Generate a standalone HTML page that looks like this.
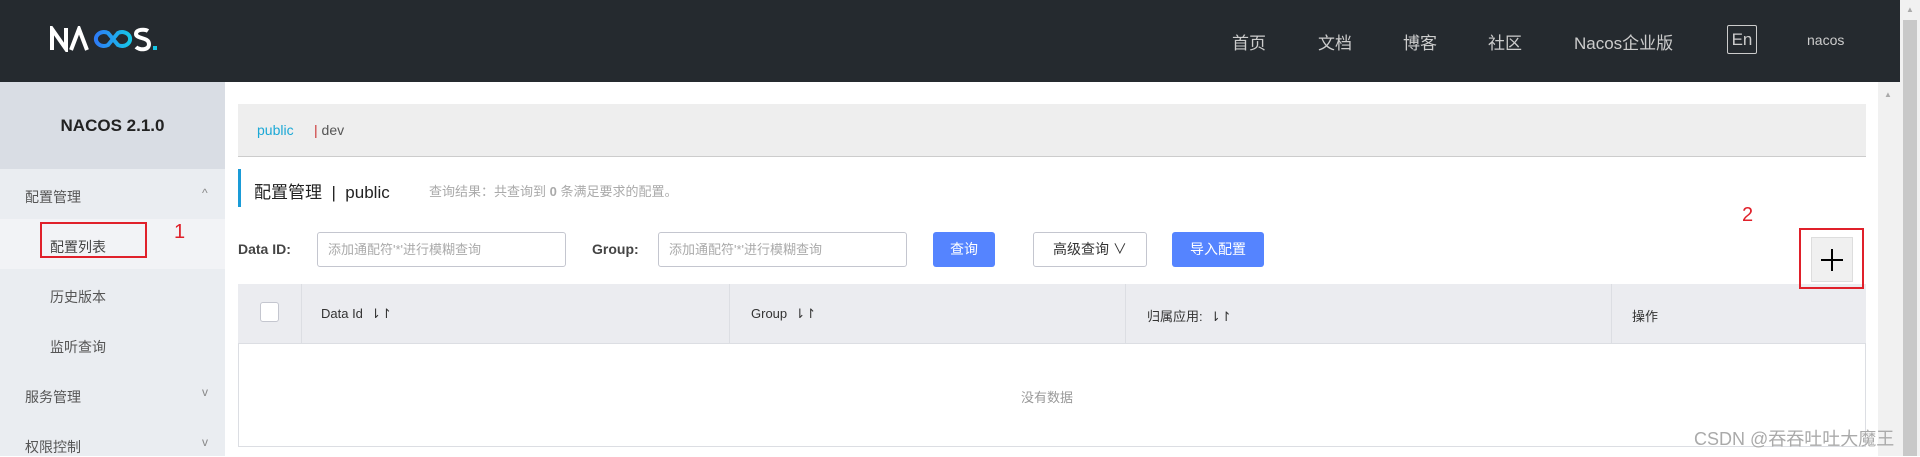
<!DOCTYPE html>
<html><head><meta charset="utf-8"><style>
*{margin:0;padding:0;box-sizing:border-box}
body{width:1920px;height:456px;overflow:hidden;background:#fff;font-family:"Liberation Sans","Noto Sans CJK SC",sans-serif;position:relative;color:#333}
.a{position:absolute;white-space:nowrap}
</style></head><body>
<div class="a" style="left:0;top:0;width:1900px;height:82px;background:#252a2f"></div>
<svg class="a" style="left:48px;top:26px" width="126" height="26" viewBox="0 0 126 26">
<defs><linearGradient id="g" x1="0" x2="1"><stop offset="0" stop-color="#2d7cf6"/><stop offset="1" stop-color="#17c7e8"/></linearGradient></defs>
<path d="M4 24V3L18 23V2" stroke="#fff" stroke-width="4" fill="none"/>
<path d="M23 24L31 3L39 24" stroke="#fff" stroke-width="4" fill="none"/>
<path d="M60 7a8 7 0 1 0 0 12L70 7a8 7 0 1 1 0 12Z" stroke="url(#g)" stroke-width="4" fill="none"/>
<path d="M100 5c-3-2-12-2-12 3s13 3 13 10-10 6-13 3" stroke="#fff" stroke-width="4" fill="none"/>
<rect x="105" y="20" width="4" height="4" fill="#17c7e8"/>
</svg>
<div class="a" style="left:1232px;top:29px;font-size:17px;color:#ccc">首页</div>
<div class="a" style="left:1318px;top:29px;font-size:17px;color:#ccc">文档</div>
<div class="a" style="left:1403px;top:29px;font-size:17px;color:#ccc">博客</div>
<div class="a" style="left:1488px;top:29px;font-size:17px;color:#ccc">社区</div>
<div class="a" style="left:1574px;top:29px;font-size:17px;color:#ccc">Nacos企业版</div>
<div class="a" style="left:1727px;top:25px;width:30px;height:29px;border:1px solid #ccc;border-radius:2px;color:#ccc;font-size:17px;text-align:center;line-height:27px">En</div>
<div class="a" style="left:1807px;top:32px;font-size:14px;color:#ccc">nacos</div>

<div class="a" style="left:0;top:82px;width:225px;height:374px;background:#eaedf1"></div>
<div class="a" style="left:0;top:82px;width:225px;height:87px;background:#d9dde4"></div>
<div class="a" style="left:0;top:116px;width:225px;text-align:center;font-size:17px;font-weight:bold;color:#222">NACOS 2.1.0</div>
<div class="a" style="left:25px;top:187px;font-size:14px;color:#555">配置管理</div>
<div class="a" style="left:202px;top:186px;font-size:12px;color:#888">^</div>
<div class="a" style="left:0;top:219px;width:225px;height:50px;background:#f2f3f6"></div>
<div class="a" style="left:50px;top:237px;font-size:14px;color:#444">配置列表</div>
<div class="a" style="left:40px;top:222px;width:107px;height:36px;border:2px solid #e0202a"></div>
<div class="a" style="left:174px;top:221px;font-size:20px;color:#e0202a">1</div>
<div class="a" style="left:50px;top:287px;font-size:14px;color:#555">历史版本</div>
<div class="a" style="left:50px;top:337px;font-size:14px;color:#555">监听查询</div>
<div class="a" style="left:25px;top:387px;font-size:14px;color:#555">服务管理</div>
<div class="a" style="left:202px;top:385px;font-size:12px;color:#888">v</div>
<div class="a" style="left:25px;top:437px;font-size:14px;color:#555">权限控制</div>
<div class="a" style="left:202px;top:435px;font-size:12px;color:#888">v</div>

<div class="a" style="left:238px;top:104px;width:1628px;height:53px;background:#eee;border-bottom:1px solid #ccc"></div>
<div class="a" style="left:257px;top:122px;font-size:14px;color:#1ba8d6">public</div>
<div class="a" style="left:314px;top:122px;font-size:14px;color:#555"><span style="color:#c33">|</span> dev</div>
<div class="a" style="left:238px;top:169px;width:3px;height:38px;background:#1a9bd7"></div>
<div class="a" style="left:254px;top:178px;font-size:17px;color:#222">配置管理 &nbsp;|&nbsp; public</div>
<div class="a" style="left:429px;top:181px;font-size:13px;color:#aaa">查询结果：共查询到 <b>0</b> 条满足要求的配置。</div>

<div class="a" style="left:238px;top:241px;font-size:14px;font-weight:bold;color:#444">Data ID:</div>
<div class="a" style="left:317px;top:232px;width:249px;height:35px;border:1px solid #c4c6cf;border-radius:3px;padding-left:10px;line-height:33px;font-size:13px;color:#aaa">添加通配符'*'进行模糊查询</div>
<div class="a" style="left:592px;top:241px;font-size:14px;font-weight:bold;color:#444">Group:</div>
<div class="a" style="left:658px;top:232px;width:249px;height:35px;border:1px solid #c4c6cf;border-radius:3px;padding-left:10px;line-height:33px;font-size:13px;color:#aaa">添加通配符'*'进行模糊查询</div>
<div class="a" style="left:933px;top:232px;width:62px;height:35px;background:#5584ff;border-radius:3px;color:#fff;font-size:14px;text-align:center;line-height:35px">查询</div>
<div class="a" style="left:1033px;top:232px;width:114px;height:35px;border:1px solid #c4c6cf;border-radius:3px;color:#333;font-size:14px;text-align:center;line-height:33px">高级查询 ∨</div>
<div class="a" style="left:1172px;top:232px;width:92px;height:35px;background:#5584ff;border-radius:3px;color:#fff;font-size:14px;text-align:center;line-height:35px">导入配置</div>

<div class="a" style="left:238px;top:284px;width:1628px;height:163px;border:1px solid #dcdee3"></div>
<div class="a" style="left:238px;top:284px;width:1628px;height:60px;background:#ebecf0;border-bottom:1px solid #dcdee3"></div>
<div class="a" style="left:301px;top:284px;width:1px;height:60px;background:#dcdee3"></div>
<div class="a" style="left:729px;top:284px;width:1px;height:60px;background:#dcdee3"></div>
<div class="a" style="left:1125px;top:284px;width:1px;height:60px;background:#dcdee3"></div>
<div class="a" style="left:1611px;top:284px;width:1px;height:60px;background:#dcdee3"></div>
<div class="a" style="left:260px;top:302px;width:19px;height:20px;background:#fff;border:1px solid #c4c6cf;border-radius:3px"></div>
<div class="a" style="left:321px;top:306px;font-size:13px;color:#333">Data Id &nbsp;⇂↾</div>
<div class="a" style="left:751px;top:306px;font-size:13px;color:#333">Group &nbsp;⇂↾</div>
<div class="a" style="left:1147px;top:306px;font-size:13px;color:#333">归属应用: &nbsp;⇂↾</div>
<div class="a" style="left:1632px;top:306px;font-size:13px;color:#333">操作</div>
<div class="a" style="left:1021px;top:387px;font-size:13px;color:#999">没有数据</div>

<div class="a" style="left:1742px;top:204px;font-size:20px;color:#e0202a">2</div>
<div class="a" style="left:1811px;top:237px;width:42px;height:45px;background:#f0f0f0;border:1px solid #ddd"></div>
<div class="a" style="left:1821px;top:259px;width:22px;height:2px;background:#000"></div>
<div class="a" style="left:1831px;top:249px;width:2px;height:22px;background:#000"></div>
<div class="a" style="left:1799px;top:228px;width:65px;height:61px;border:2px solid #e0202a"></div>

<div class="a" style="left:1878px;top:82px;width:22px;height:374px;background:#f1f1f1"></div>
<div class="a" style="left:1884px;top:90px;font-size:8px;color:#aaa">▲</div>
<div class="a" style="left:1900px;top:0;width:20px;height:456px;background:#f1f1f1"></div>
<div class="a" style="left:1903px;top:20px;width:14px;height:436px;background:#c8c8c8"></div>
<div class="a" style="left:1906px;top:5px;font-size:8px;color:#aaa">▲</div>
<div class="a" style="left:1694px;top:425px;font-size:18px;color:#aaa">CSDN @吞吞吐吐大魔王</div>
</body></html>
